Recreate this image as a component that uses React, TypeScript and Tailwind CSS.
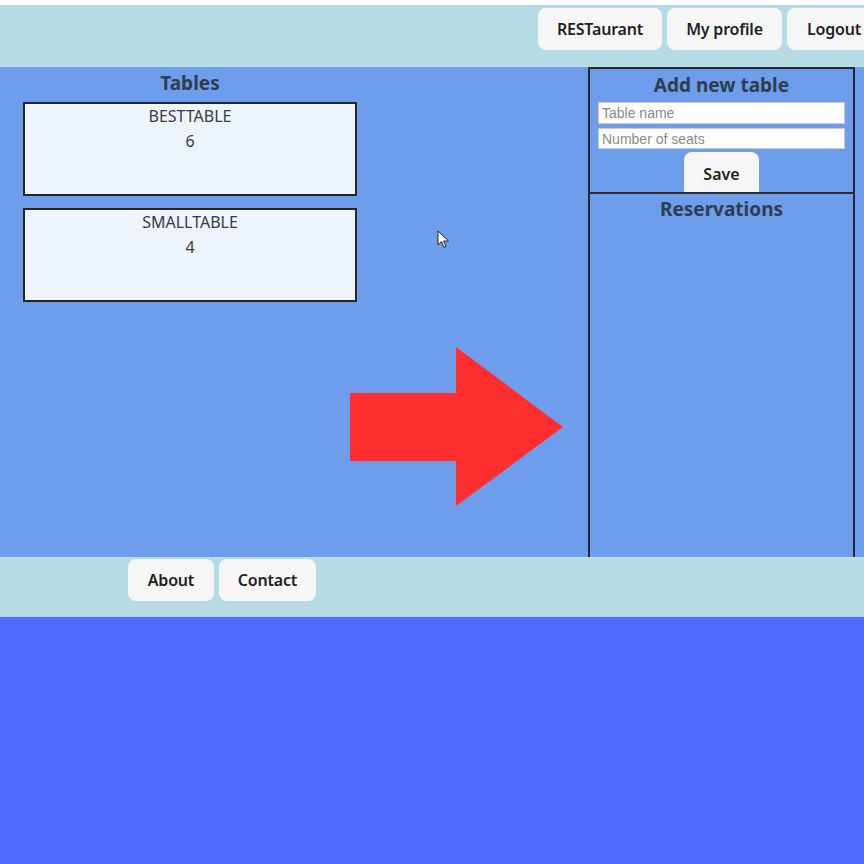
import React from 'react';

const tables = [
  { name: 'BESTTABLE', seats: 6 },
  { name: 'SMALLTABLE', seats: 4 },
];

const NavButton = ({ label, width }: { label: string; width: string }) => (
  <button
    className={`h-[42px] ${width} shrink-0 rounded-lg bg-[#f6f6f6] text-[16px] font-semibold text-[#1f1f1f] whitespace-nowrap tracking-[-0.2px]`}
  >
    {label}
  </button>
);

export default function App() {
  return (
    <div className="relative w-[864px] h-[864px] overflow-hidden bg-[#506afe] font-['Noto_Sans',sans-serif]">
      <div className="h-[5px] bg-white" />

      {/* Header */}
      <header className="h-[62px] bg-[#b5dce5] flex gap-[5px] pt-[3px] pl-[538px] overflow-hidden">
        <NavButton label="RESTaurant" width="w-[124px]" />
        <NavButton label="My profile" width="w-[115px]" />
        <NavButton label="Logout" width="w-[94px]" />
      </header>

      {/* Main */}
      <main className="h-[490px] bg-[#6d9deb] flex">
        <section className="w-[380px] flex flex-col items-center">
          <h2 className="text-[19px] font-bold text-[#2c3e50] leading-[30px] mt-[1px]">Tables</h2>
          <div className="flex flex-col gap-3 mt-[4px]">
            {tables.map((t) => (
              <div
                key={t.name}
                className="w-[334px] h-[94px] border-2 border-[#262626] bg-[#eef4fb] flex flex-col items-center pt-0 text-[16px] text-[#3a3a3a] leading-[25px]"
              >
                <span>{t.name}</span>
                <span>{t.seats}</span>
              </div>
            ))}
          </div>
        </section>

        <div className="flex-1" />

        <aside className="w-[267px] mr-[9px] border-2 border-b-0 border-[#262a33] flex flex-col">
          <div className="flex flex-col items-center px-[8px] border-b-2 border-[#262a33] h-[125px]">
            <h3 className="text-[19px] font-bold text-[#2c3e50] leading-[30px] mt-[1px]">Add new table</h3>
            <input
              placeholder="Table name"
              className="w-full h-[22px] mt-[2px] px-[3px] bg-white border border-[#c8c8c8] text-[14px] font-['Liberation_Sans',sans-serif] placeholder:text-[#8a8a8a] outline-none"
            />
            <input
              placeholder="Number of seats"
              className="w-full h-[22px] mt-[4px] px-[3px] bg-white border border-[#c8c8c8] text-[14px] font-['Liberation_Sans',sans-serif] placeholder:text-[#8a8a8a] outline-none"
            />
            <button className="mt-[3px] w-[75px] h-[40px] rounded-t-lg bg-[#f6f6f6] text-[16px] font-semibold text-[#1f1f1f] pt-[3px]">
              Save
            </button>
          </div>
          <h3 className="text-center text-[19px] font-bold text-[#2c3e50] leading-[30px]">Reservations</h3>
        </aside>
      </main>

      {/* Footer */}
      <footer className="h-[60px] bg-[#b5dce5] flex gap-[5px] pl-[128px] pt-[2px]">
        <NavButton label="About" width="w-[86px]" />
        <NavButton label="Contact" width="w-[97px]" />
      </footer>

      {/* Annotation arrow */}
      <svg className="absolute left-[350px] top-[347px]" width="214" height="160" viewBox="0 0 214 160">
        <polygon points="0,46 106,46 106,0 213,80 106,159 106,114 0,114" fill="#ff2f2f" />
      </svg>

      {/* Mouse cursor */}
      <svg className="absolute left-[437px] top-[230px]" width="14" height="20" viewBox="0 0 14 20">
        <path d="M1 1 L1 15 L4.5 11.5 L7 17.5 L9 16.6 L6.6 11 L11.5 11 Z" fill="#fff" stroke="#222" strokeWidth="1" strokeLinejoin="round" />
      </svg>
    </div>
  );
}
